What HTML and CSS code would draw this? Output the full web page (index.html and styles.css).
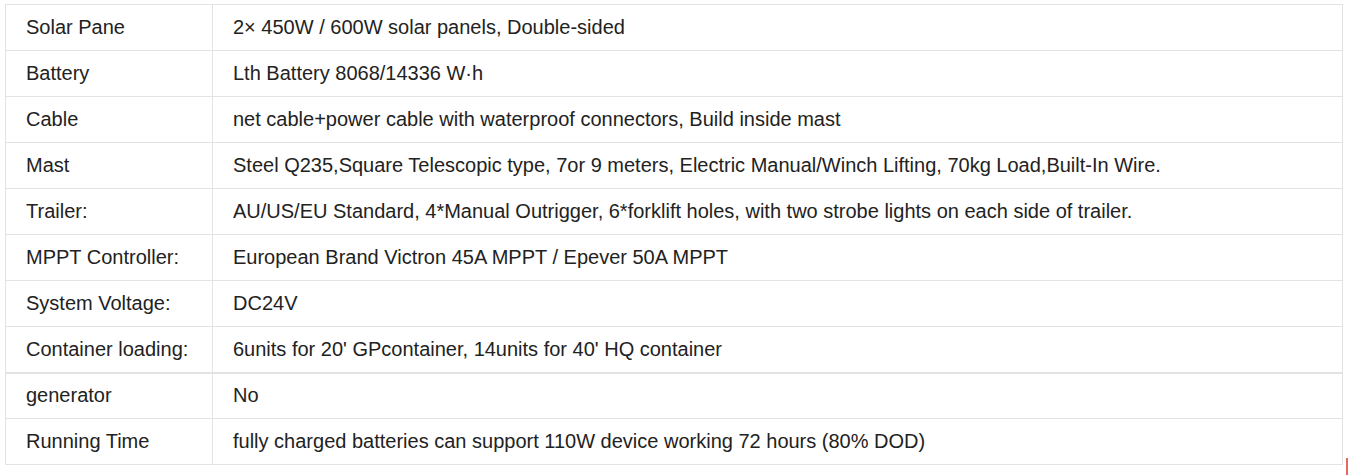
FILE: index.html
```html
<!DOCTYPE html>
<html>
<head>
<meta charset="utf-8">
<link rel="stylesheet" href="styles.css">
</head>
<body>
<table class="spec">
  <tbody>
    <tr><td class="k">Solar Pane</td><td class="v">2× 450W / 600W solar panels, Double-sided</td></tr>
    <tr><td class="k">Battery</td><td class="v">Lth Battery 8068/14336 W·h</td></tr>
    <tr><td class="k">Cable</td><td class="v">net cable+power cable with waterproof connectors, Build inside mast</td></tr>
    <tr><td class="k">Mast</td><td class="v">Steel Q235,Square Telescopic type, 7or 9 meters, Electric Manual/Winch Lifting, 70kg Load,Built-In Wire.</td></tr>
    <tr><td class="k">Trailer:</td><td class="v">AU/US/EU Standard, 4*Manual Outrigger, 6*forklift holes, with two strobe lights on each side of trailer.</td></tr>
    <tr><td class="k">MPPT Controller:</td><td class="v">European Brand Victron 45A MPPT / Epever 50A MPPT</td></tr>
    <tr><td class="k">System Voltage:</td><td class="v">DC24V</td></tr>
    <tr class="split"><td class="k">Container loading:</td><td class="v">6units for 20' GPcontainer, 14units for 40' HQ container</td></tr>
    <tr><td class="k">generator</td><td class="v">No</td></tr>
    <tr><td class="k">Running Time</td><td class="v">fully charged batteries can support 110W device working 72 hours (80% DOD)</td></tr>
  </tbody>
</table>
<div class="edge-mark"></div>
</body>
</html>
```
FILE: styles.css
```css
html, body {
  margin: 0;
  padding: 0;
  background: #ffffff;
}
body {
  padding: 4px 5px 0 5px;
  font-family: "Liberation Sans", Arial, sans-serif;
  color: #222222;
  position: relative;
  height: 471px;
  overflow: hidden;
}
.spec {
  border-collapse: collapse;
  width: 1338px;
  table-layout: fixed;
}
.spec td {
  border: 1px solid #e3e3e3;
  height: 46px;
  box-sizing: border-box;
  padding: 0 20px;
  font-size: 20px;
  line-height: 23px;
  vertical-align: middle;
  white-space: nowrap;
}
.spec .k {
  width: 207px;
}
.spec tr.split td {
  border-bottom: 2px solid #e3e3e3;
}
.edge-mark {
  position: absolute;
  right: 0;
  top: 458px;
  width: 2px;
  height: 17px;
  background: #e8675e;
}
```
